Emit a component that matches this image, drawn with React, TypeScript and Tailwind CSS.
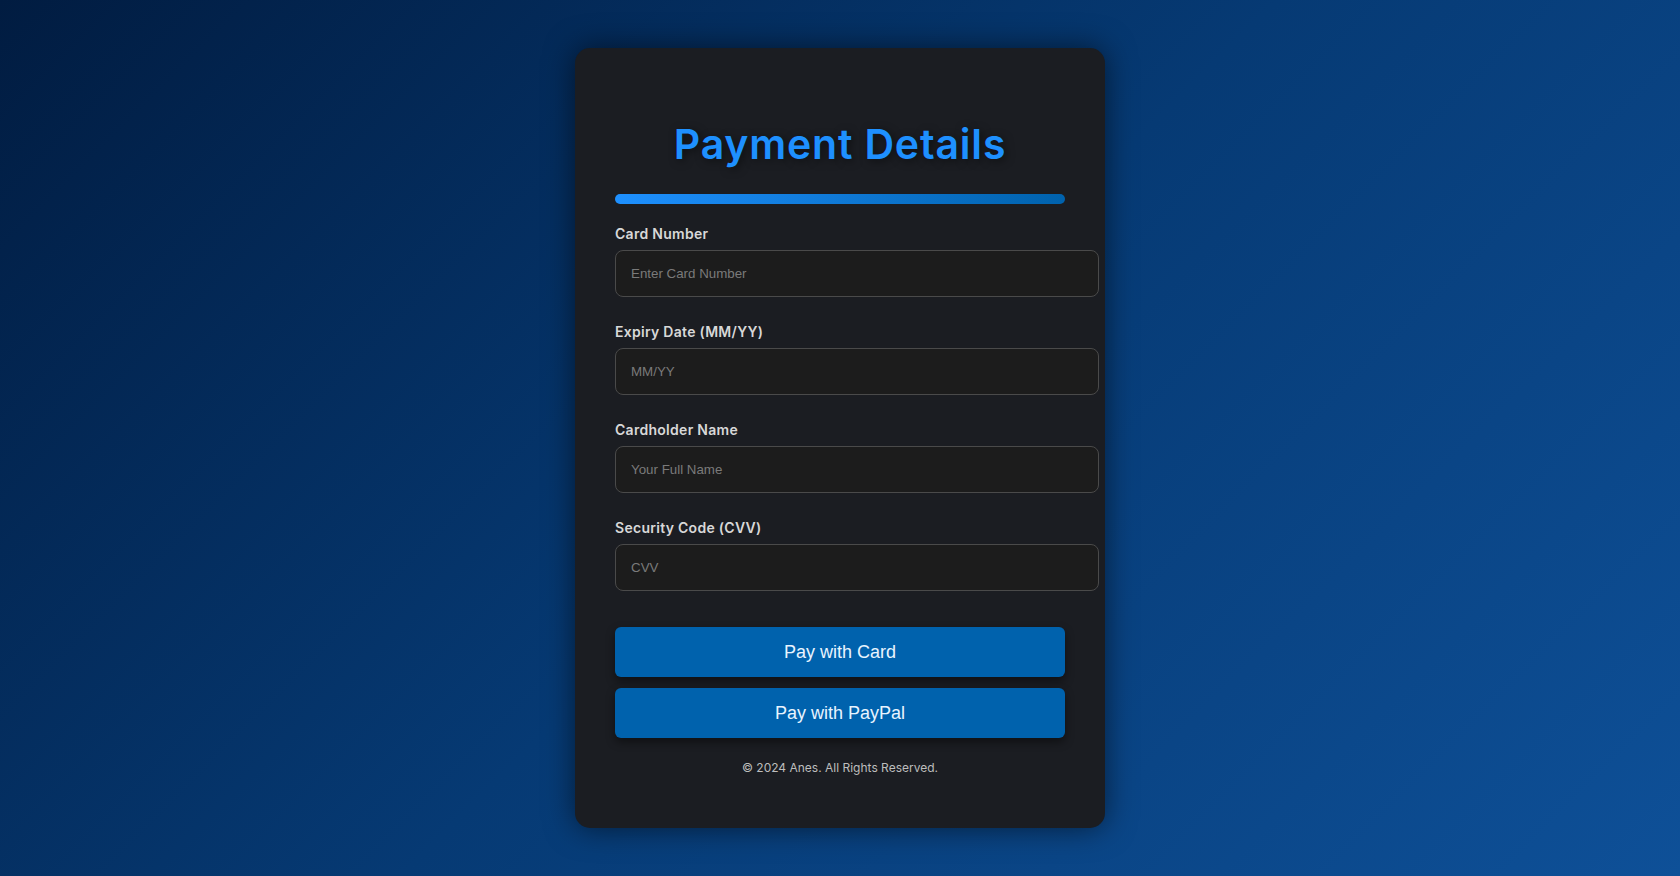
import React from "react";

const fields = [
  { label: "Card Number", placeholder: "Enter Card Number" },
  { label: "Expiry Date (MM/YY)", placeholder: "MM/YY" },
  { label: "Cardholder Name", placeholder: "Your Full Name" },
  { label: "Security Code (CVV)", placeholder: "CVV" },
];

export default function App() {
  return (
    <div className="flex h-[876px] w-full items-center justify-center bg-[linear-gradient(135deg,#011c41_0%,#063a74_50%,#0e5098_100%)] font-['Inter',sans-serif]">
      <div className="flex h-[780px] w-[530px] flex-col rounded-[15px] bg-[#1b1d22] px-[40px] pt-[72px] shadow-[0_0_30px_rgba(0,0,0,0.55)]">
        <h1 className="h-[48px] text-center text-[41px] font-semibold leading-[48px] tracking-[0.02em] text-[#1e90ff] [text-shadow:2px_2px_8px_rgba(0,0,0,0.5)]">
          Payment Details
        </h1>
        <div className="mt-[26px] h-[10px] w-[450px] rounded-full bg-[linear-gradient(90deg,#1e90ff,#0062ad)]" />

        <form className="mt-[20px] flex flex-col" onSubmit={(e) => e.preventDefault()}>
          {fields.map((f, i) => (
            <div key={f.label} className={i === 0 ? "" : "mt-[25px]"}>
              <label className="block h-[20px] text-[14px] font-semibold leading-[20px] tracking-[0.02em] text-[#d8d8d8]">
                {f.label}
              </label>
              <input
                type="text"
                placeholder={f.placeholder}
                className="mt-[6px] block h-[47px] w-[484px] rounded-[8px] border border-[#4a4a4a] bg-[#1c1c1c] px-[15px] font-['Liberation_Sans',Arial,sans-serif] text-[13.33px] text-[#ddd] outline-none placeholder:text-[#7a7a7a]"
              />
            </div>
          ))}

          <button
            type="button"
            className="mt-[36px] h-[50px] w-[450px] rounded-[6px] bg-[#0062ad] font-['Liberation_Sans',Arial,sans-serif] text-[18px] text-[#e8f4ff] shadow-[0_4px_10px_rgba(0,0,0,0.45)]"
          >
            Pay with Card
          </button>
          <button
            type="button"
            className="mt-[11px] h-[50px] w-[450px] rounded-[6px] bg-[#0062ad] font-['Liberation_Sans',Arial,sans-serif] text-[18px] text-[#e8f4ff] shadow-[0_4px_10px_rgba(0,0,0,0.45)]"
          >
            Pay with PayPal
          </button>
        </form>

        <p className="mt-[21px] w-[450px] text-center text-[12px] leading-[18px] text-[#bdbdbd]">
          © 2024 Anes. All Rights Reserved.
        </p>
      </div>
    </div>
  );
}
